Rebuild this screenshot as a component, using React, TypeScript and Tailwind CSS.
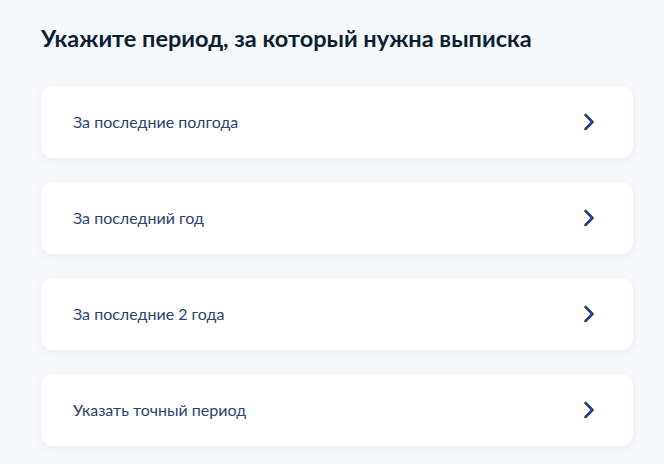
import React from "react";

const items = [
  "За последние полгода",
  "За последний год",
  "За последние 2 года",
  "Указать точный период",
];

export default function App() {
  return (
    <div className="w-[664px] h-[464px] overflow-hidden bg-[#f6f8fb] pl-[41px] pr-[31px] pt-[22px]" style={{ fontFamily: "Lato, 'Noto Sans', sans-serif" }}>
      <h1 className="text-[23.5px] leading-[32px] font-bold text-[#0b1f33]">
        Укажите период, за который нужна выписка
      </h1>
      <div className="mt-[32px] flex flex-col gap-[24px]">
        {items.map((t) => (
          <div
            key={t}
            className="h-[72px] rounded-[12px] bg-white shadow-[0_2px_8px_rgba(11,31,51,0.06)] flex items-center justify-between pl-[32px] pr-[38px]"
          >
            <span className="text-[16px] text-[#2f4170]">{t}</span>
            <svg width="12" height="18" viewBox="0 0 12 18" fill="none">
              <path d="M2.5 2 L9.5 9 L2.5 16" stroke="#1d3c8c" strokeWidth="2.6" strokeLinecap="round" strokeLinejoin="round" />
            </svg>
          </div>
        ))}
      </div>
    </div>
  );
}
